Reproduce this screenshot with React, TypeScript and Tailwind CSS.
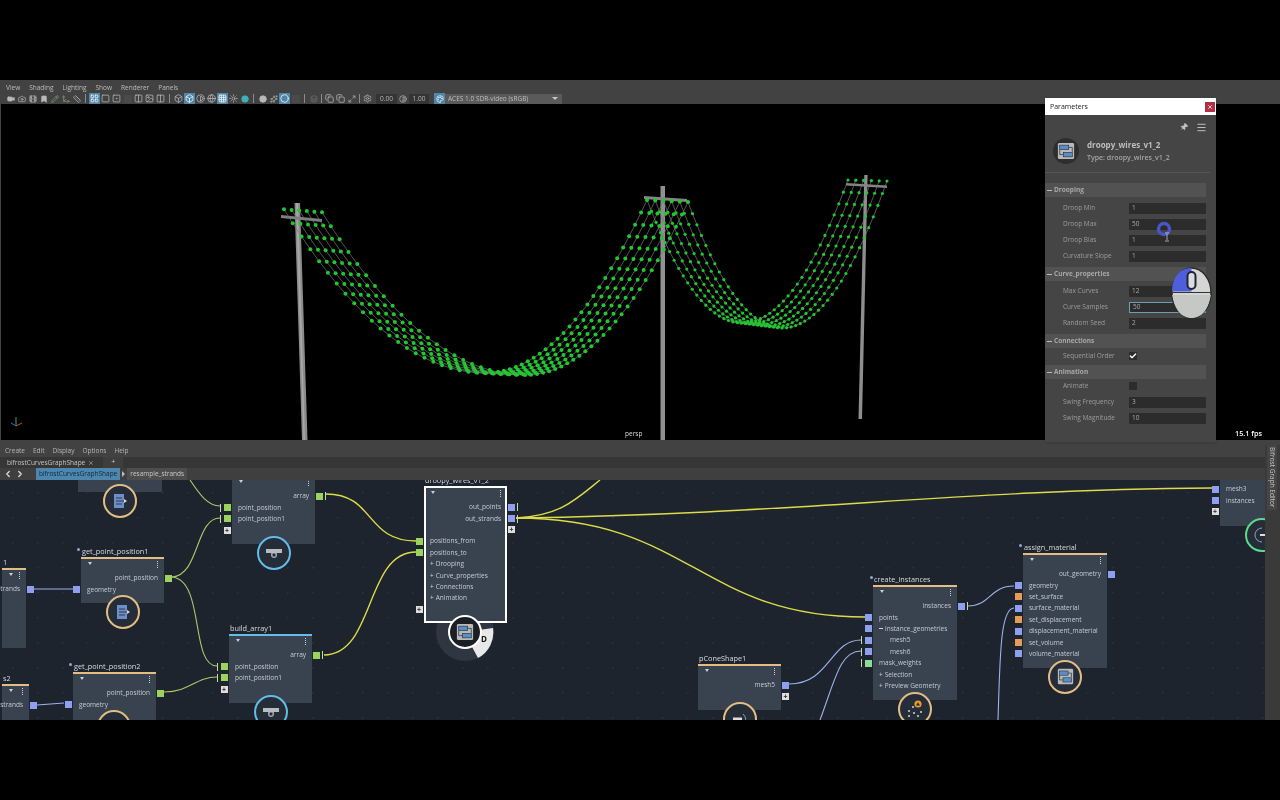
import React from "react";
import {
  Video,
  Camera,
  Film,
  Bookmark,
  Pencil,
  Move3d,
  Ruler,
  LayoutGrid,
  Square,
  SquareDot,
  Columns2,
  Image,
  Box,
  Sun,
  Circle,
  Layers,
  Copy,
  Maximize2,
  Settings,
  Contrast,
  Palette,
  Globe,
  Grid3x3,
  Sparkles,
  ChevronLeft,
  ChevronRight,
  X,
  Pin,
  Menu,
  Check,
} from "lucide-react";

// wire = two parabolas that meet at the lowest point, sampled as dots
type Pt = [number, number];

const sampleWire = (
  a: Pt,
  low: Pt,
  b: Pt,
  nLeft: number,
  nRight: number,
): Pt[] => {
  const pts: Pt[] = [];
  for (let i = 0; i < nLeft; i++) {
    const u = i / nLeft;
    pts.push([
      a[0] + (low[0] - a[0]) * u,
      low[1] - (low[1] - a[1]) * (1 - u) * (1 - u),
    ]);
  }
  for (let i = 0; i <= nRight; i++) {
    const u = i / nRight;
    pts.push([low[0] + (b[0] - low[0]) * u, low[1] - (low[1] - b[1]) * u * u]);
  }
  return pts;
};

const wires: { pts: Pt[]; r: number }[] = [];
for (let k = 0; k < 6; k++) {
  wires.push({
    r: 2,
    pts: sampleWire(
      [322 - 7.6 * k, 212.3 - 0.6 * k],
      [525 - 7.8 * k, 375 - 0.4 * k],
      [688 - 8.2 * k, 202 - 0.4 * k],
      23,
      27,
    ),
  });
  wires.push({
    r: 1.6,
    pts: sampleWire(
      [688 - 8.2 * k, 202 - 0.4 * k],
      [782 - 8 * k, 328 - 1 * k],
      [887 - 7.8 * k, 181 - 0.2 * k],
      21,
      23,
    ),
  });
}

const Viewport3D = () => (
  <svg
    className="absolute inset-0 w-full h-full"
    viewBox="1 104 1279 336"
    fill="none"
  >
    <polygon points="294.5,203 300,203 307.5,440 302,440" fill="#8c8c8c" />
    <polygon points="296,203 298,203 305,440 303.5,440" fill="#a8a8a8" />
    <polygon points="281,215 322,219 322,222 281,218" fill="#7e7e7e" />
    <polygon points="660.5,186 665,186 665,440 660.5,440" fill="#909090" />
    <polygon points="644,196 687,199 687,202 644,199" fill="#858585" />
    <polygon points="864.3,175 867.6,175 862,419 858.5,419" fill="#8e8e8e" />
    <polygon points="846,183 887,185.5 887,188 846,185.5" fill="#858585" />
    {wires.map((w, i) => (
      <g key={i}>
        <polyline
          points={w.pts.map((p) => p.join(",")).join(" ")}
          stroke="#777"
          strokeWidth="0.7"
        />
        {w.pts.map((p, j) => (
          <circle key={j} cx={p[0]} cy={p[1]} r={w.r} fill="#1fc92f" />
        ))}
      </g>
    ))}
    <line x1="16" y1="426" x2="22" y2="423" stroke="#c44" strokeWidth="1" />
    <line x1="16" y1="426" x2="16" y2="417" stroke="#3a6" strokeWidth="1" />
    <line x1="16" y1="426" x2="11" y2="423" stroke="#46c" strokeWidth="1" />
  </svg>
);

const Tb = ({
  children,
  on,
}: {
  children?: React.ReactNode;
  on?: boolean;
}) => (
  <div
    className={`w-[11px] h-[11px] shrink-0 flex items-center justify-center text-[#b9b9b9] ${
      on ? "bg-[#4f87a8] text-white" : ""
    }`}
  >
    {children}
  </div>
);

const Sep = ({ tight }: { tight?: boolean }) => (
  <div
    className={`w-px h-[9px] bg-[#8a8a8a] shrink-0 ${
      tight ? "mx-[2px]" : "mx-[3px]"
    }`}
  />
);

const Toolbar = () => (
  <div className="h-[11px] flex items-center pl-[5px] text-[6.5px]">
    <Tb><Video size={8} fill="currentColor" /></Tb>
    <Tb><Camera size={8} /></Tb>
    <Tb><Film size={8} /></Tb>
    <Tb><Bookmark size={8} fill="currentColor" /></Tb>
    <Tb><Pencil size={8} className="text-[#7fae7f]" /></Tb>
    <Tb><Move3d size={8} className="text-[#7fae7f]" /></Tb>
    <Tb><Ruler size={8} /></Tb>
    <Sep />
    <Tb on><LayoutGrid size={9} /></Tb>
    <Tb><Square size={9} /></Tb>
    <Tb><SquareDot size={9} /></Tb>
    <Tb><div className="w-[8px] h-[8px] bg-[#4a4a4a]" /></Tb>
    <Tb><Columns2 size={9} /></Tb>
    <Tb><Image size={9} /></Tb>
    <Tb><Columns2 size={9} /></Tb>
    <Sep />
    <Tb><Box size={9} /></Tb>
    <Tb on><Box size={9} /></Tb>
    <Tb><Contrast size={9} /></Tb>
    <Tb><Globe size={9} /></Tb>
    <Tb on><Grid3x3 size={9} /></Tb>
    <Tb><Sun size={9} /></Tb>
    <Tb><Circle size={8} fill="#3fb0b8" className="text-[#3fb0b8]" /></Tb>
    <Sep />
    <Tb><Circle size={8} fill="currentColor" /></Tb>
    <Tb><Sparkles size={8} /></Tb>
    <Tb on><Circle size={9} /></Tb>
    <Tb><div className="w-[8px] h-[8px] bg-[#4a4a4a]" /></Tb>
    <Sep />
    <Tb><Layers size={8} className="text-[#777]" /></Tb>
    <Sep tight />
    <Tb><Copy size={9} /></Tb>
    <Tb><Copy size={9} /></Tb>
    <Tb><Maximize2 size={8} /></Tb>
    <Sep tight />
    <Tb><Settings size={9} /></Tb>
    <div className="w-[21px] h-[10px] ml-[3px] bg-[#343434] text-[#b5b5b5] flex items-center justify-center">0.00</div>
    <Tb><Contrast size={8} /></Tb>
    <div className="w-[20px] h-[10px] ml-px bg-[#343434] text-[#b5b5b5] flex items-center justify-center">1.00</div>
    <div className="ml-[5px]">
      <Tb on><Palette size={8} /></Tb>
    </div>
    <div className="w-[117px] h-[10px] bg-[#5a5a5a] text-[#bdbdbd] flex items-center justify-between pl-[3px] pr-[4px]">
      <span>ACES 1.0 SDR-video (sRGB)</span>
      <span className="w-0 h-0 border-l-[3px] border-r-[3px] border-t-[3px] border-l-transparent border-r-transparent border-t-[#c4c4c4]" />
    </div>
  </div>
);

const CompoundIcon = ({ size = 20 }: { size?: number }) => (
  <svg width={size} height={size} viewBox="0 0 20 20" fill="none">
    <rect x="1" y="1" width="18" height="18" rx="1.5" fill="#b9b9b9" />
    <rect x="3" y="3.5" width="10" height="5" fill="#5b8ec9" stroke="#26303a" strokeWidth="0.7" />
    <rect x="7" y="11.5" width="10" height="5" fill="#5b8ec9" stroke="#26303a" strokeWidth="0.7" />
    <path d="M3 8.5v5.5h4M13 6h4v5" stroke="#26303a" strokeWidth="0.8" />
  </svg>
);

const ParamInput = ({ value, focus }: { value: string; focus?: boolean }) => (
  <div
    className={`w-[77px] h-[11px] bg-[#2c2c2c] flex items-center pl-[3px] text-[#a9a9a9] ${
      focus ? "border border-[#6d9cb8]" : ""
    }`}
  >
    {value}
  </div>
);

const ParamRow = ({ label, children }: { label: string; children: React.ReactNode }) => (
  <div className="h-4 flex items-center pl-[18px]">
    <span className="w-[66px] text-[#9c9c9c]">{label}</span>
    {children}
  </div>
);

const Section = ({
  title,
  top,
  body,
  children,
}: {
  title: string;
  top: string;
  body: string;
  children: React.ReactNode;
}) => (
  <div>
    <div className={`${top} w-[161px] h-[14px] bg-[#525252] flex items-center pl-[2px] gap-[2px] text-[#a8a8a8] font-bold`}>
      <span className="w-[5px] h-px bg-[#bbb]" />
      {title}
    </div>
    <div className={body}>{children}</div>
  </div>
);

const ParametersPanel = () => (
  <div className="absolute left-[1044px] top-[-6px] w-[171px] h-[344px] bg-[#454545] text-[6.5px] shadow">
    <div className="h-[17px] pt-px bg-white flex items-center justify-between pl-[5px] pr-[1px] text-[#222] text-[7px]">
      Parameters
      <div className="w-[10px] h-[10px] bg-[#b23043] flex items-center justify-center">
        <X size={6} className="text-white" strokeWidth={3} />
      </div>
    </div>
    <div className="mt-[6px] h-3 flex items-center justify-end gap-[8px] pr-[9px] text-[#c8c8c8]">
      <Pin size={8} className="rotate-45" fill="currentColor" />
      <Menu size={11} />
    </div>
    <div className="mt-[5px] h-[26px] flex items-center pl-[8px] gap-[8px]">
      <div className="w-[26px] h-[26px] rounded-full bg-[#2e2e2e] flex items-center justify-center">
        <CompoundIcon size={18} />
      </div>
      <div className="flex flex-col gap-[3px]">
        <span className="text-[8px] leading-[10px] font-bold text-[#bdbdbd]">droopy_wires_v1_2</span>
        <span className="text-[7px] leading-[9px] font-semibold text-[#a5a5a5]">Type: droopy_wires_v1_2</span>
      </div>
    </div>
    <div className="mt-[8px] w-[165px] border-t border-[#555]" />
    <div className="mt-[10px]">
      <Section title="Drooping" top="mt-[3px]" body="mt-[3px]">
        <ParamRow label="Droop Min"><ParamInput value="1" /></ParamRow>
        <ParamRow label="Droop Max"><ParamInput value="50" /></ParamRow>
        <ParamRow label="Droop Bias"><ParamInput value="1" /></ParamRow>
        <ParamRow label="Curvature Slope"><ParamInput value="1" /></ParamRow>
      </Section>
      <Section title="Curve_properties" top="mt-[3px]" body="mt-[2px]">
        <ParamRow label="Max Curves"><ParamInput value="12" /></ParamRow>
        <ParamRow label="Curve Samples"><ParamInput value="50" focus /></ParamRow>
        <ParamRow label="Random Seed"><ParamInput value="2" /></ParamRow>
      </Section>
      <Section title="Connections" top="mt-[3px]" body="mt-0">
        <ParamRow label="Sequential Order">
          <div className="w-2 h-2 bg-[#2c2c2c] flex items-center justify-center">
            <Check size={8} strokeWidth={4} className="text-white" />
          </div>
        </ParamRow>
      </Section>
      <Section title="Animation" top="mt-px" body="-mt-px">
        <ParamRow label="Animate">
          <div className="w-2 h-2 bg-[#2c2c2c]" />
        </ParamRow>
        <ParamRow label="Swing Frequency"><ParamInput value="3" /></ParamRow>
        <ParamRow label="Swing Magnitude"><ParamInput value="10" /></ParamRow>
      </Section>
    </div>
    {/* click ring + i-beam over Droop Max */}
    <svg className="absolute left-[111px] top-[122px]" width="20" height="24" viewBox="0 0 20 24" fill="none">
      <circle cx="8" cy="9" r="5.5" stroke="#4a55cc" strokeWidth="3.4" />
      <path d="M11 14v6M9 21h4M9 13h4" stroke="#ddd" strokeWidth="0.7" />
    </svg>
    {/* mouse overlay */}
    <svg className="absolute left-[126px] top-[169px]" width="41" height="52" viewBox="0 0 41 52" fill="none">
      <ellipse cx="20.5" cy="26" rx="19.5" ry="25" fill="#d5d5d5" stroke="#2a2a2a" strokeWidth="1.4" />
      <path d="M20.5 1C9 1 1 10 1 24.5h19.5z" fill="#4f5fdc" />
      <path d="M1 25.5h39" stroke="#333" strokeWidth="1.2" />
      <path d="M1.2 28C4 45 12 51 20.5 51S37 45 39.8 28z" fill="#c6c8c6" />
      <rect x="16.5" y="5" width="8" height="17" rx="4" fill="#dcdcdc" stroke="#1f2433" strokeWidth="2" />
    </svg>
  </div>
);

type Row = {
  label?: string;
  right?: boolean;
  port?: "green" | "blue" | "orange" | "pale" | "multi";
  tick?: boolean;
  plus?: boolean;
  plusRight?: boolean;
  mark?: "+" | "-";
  indent?: boolean;
};

const portColor = {
  green: "bg-[#9ad45f]",
  blue: "bg-[#8f9ff0]",
  orange: "bg-[#e89a58]",
  pale: "bg-[#8fdc95]",
  multi: "bg-[#8f9ff0]",
};

const NodeRow = ({ row }: { row: Row }) => (
  <div
    className={`relative h-[11.4px] flex items-center text-[#c4ccd4] px-[6px] ${
      row.right ? "justify-end" : ""
    } ${row.indent ? "pl-[17px]" : ""}`}
  >
    {row.mark === "+" && <span className="mr-[2px] text-[#d5d5d5]">+</span>}
    {row.mark === "-" && <span className="mr-[2px] w-[4px] h-px bg-[#d5d5d5]" />}
    <span>{row.label}</span>
    {row.port && row.right && (
      <span className={`absolute right-[-8px] w-[7px] h-[7px] ${portColor[row.port]}`} />
    )}
    {row.port && !row.right && (
      <span className={`absolute left-[-8.5px] w-[7px] h-[7px] ${portColor[row.port]}`} />
    )}
    {row.tick && row.right && (
      <span className="absolute right-[-11px] w-px h-[8px] bg-[#c9d9a0]" />
    )}
    {row.tick && !row.right && (
      <span className="absolute left-[-12px] w-px h-[8px] bg-[#c9d9a0]" />
    )}
    {row.plus && (
      <span className="absolute left-[-8.5px] w-[7px] h-[7px] bg-[#ddd] flex items-center justify-center text-[#222] text-[7px] leading-none font-bold">+</span>
    )}
    {row.plusRight && (
      <span className="absolute right-[-8px] w-[7px] h-[7px] bg-[#ddd] flex items-center justify-center text-[#222] text-[7px] leading-none font-bold">+</span>
    )}
  </div>
);

const ringIcons = {
  out: (
    <svg width="20" height="20" viewBox="0 0 20 20" fill="none">
      <rect x="4" y="3" width="10" height="14" fill="#6d8fc9" />
      <path d="M6 7h6M6 10h10M6 13h6" stroke="#26303a" strokeWidth="0.9" />
      <path d="M14 8l3 2-3 2" fill="#ddd" />
    </svg>
  ),
  cam: (
    <svg width="20" height="20" viewBox="0 0 20 20" fill="none">
      <rect x="2" y="6" width="16" height="4" fill="#b8bcc0" />
      <path d="M7 10h6v2a3 3 0 01-6 0z" fill="#9a9ea3" />
      <circle cx="10" cy="12" r="2" fill="#222c36" stroke="#bcd" strokeWidth="0.6" />
    </svg>
  ),
  compound: <CompoundIcon size={17} />,
  cone: (
    <svg width="20" height="20" viewBox="0 0 20 20" fill="none">
      <path d="M3 10h9" stroke="#ddd" strokeWidth="3" />
      <path d="M13 5a7 7 0 010 11" stroke="#8fa3b5" strokeWidth="1" />
    </svg>
  ),
  scatter: (
    <svg width="22" height="22" viewBox="0 0 22 22" fill="#d5d5d5">
      <circle cx="5" cy="13" r="1" />
      <circle cx="9" cy="9" r="1" />
      <circle cx="10" cy="15" r="1" />
      <circle cx="14" cy="18" r="1" />
      <circle cx="17" cy="14" r="1" />
      <circle cx="5" cy="18" r="1" />
      <circle cx="14" cy="6" r="3.6" fill="#e99a2f" />
      <path d="M12 7.4h4L14 4.2z" fill="#222" />
    </svg>
  ),
  mesh: (
    <svg width="20" height="20" viewBox="0 0 20 20" fill="none">
      <path d="M10 3a7 7 0 000 14" stroke="#8fa3b5" strokeWidth="1" />
      <path d="M8 10h8" stroke="#ddd" strokeWidth="2" />
    </svg>
  ),
};

const ringBorder = {
  tan: "border-[#e3bd84]",
  blue: "border-[#63bde8]",
  green: "border-[#5fd98c]",
};

const GraphNode = ({
  box,
  title,
  bar,
  rows,
  ring,
  ringColor,
  selected,
}: {
  box: string;
  title?: string;
  bar?: string;
  rows: Row[];
  ring?: keyof typeof ringIcons;
  ringColor?: keyof typeof ringBorder;
  selected?: boolean;
}) => (
  <div className={`absolute ${box}`}>
    <div
      className={`w-full h-full bg-[#39434f] ${
        bar ? `${bar} pt-[13.5px]` : "pt-[15.5px]"
      } ${selected ? "ring-2 ring-inset ring-white" : ""}`}
    >
      {rows.map((r, i) => (
        <NodeRow key={i} row={r} />
      ))}
    </div>
    <span className="absolute left-[7px] top-[2px] w-0 h-0 mt-[3px] border-l-[2px] border-r-[2px] border-t-[3px] border-l-transparent border-r-transparent border-t-[#c9d2da]" />
    <span className="absolute right-[6px] top-[4px] w-px h-[7px] border-l border-dotted border-[#c9d2da]" />
    {title && (
      <span className="absolute -top-[10.5px] left-[1px] text-[#d5dbe0] text-[7.3px] leading-[9px] whitespace-nowrap">
        {title}
      </span>
    )}
    {ring && ringColor && (
      <div
        className={`absolute left-1/2 -translate-x-1/2 top-[calc(100%-8.5px)] w-[34px] h-[34px] rounded-full border-2 bg-[#242d38] flex items-center justify-center ${ringBorder[ringColor]}`}
      >
        {ringIcons[ring]}
      </div>
    )}
  </div>
);

const tanBar = "border-t-2 border-[#e3bd84]";
const blueBar = "border-t-2 border-[#63bde8]";

const GraphCanvas = () => (
  <div className="relative flex-1 overflow-hidden bg-[#1d242d] bg-[radial-gradient(#272f39_1px,transparent_1px)] bg-[size:25px_25px] text-[6.5px]">
    <svg className="absolute inset-0 w-full h-full" viewBox="0 480 1265 240" fill="none">
      <g stroke="#dcdc4a" strokeWidth="1.4">
        <path d="M516 518C800 514 950 490 1212 488" />
        <path d="M516 518C560 516 575 500 600 480" />
        <path d="M516 518C690 518 700 617 865 617" />
        <path d="M326 494C375 494 365 541 416 541" />
        <path d="M324 655C375 655 365 552 416 552" />
      </g>
      <g stroke="#a9c96a" strokeWidth="1.1">
        <path d="M190 480C200 495 208 506 220 506" />
        <path d="M172 577C200 575 195 518 220 518" />
        <path d="M172 577C205 580 190 666 217 666" />
        <path d="M164 692C190 692 195 677 217 677" />
      </g>
      <g stroke="#9fb2ea" strokeWidth="1.1">
        <path d="M34 589H73" />
        <path d="M37 705L64 703" />
        <path d="M789 684C830 684 830 640 861 640" />
        <path d="M820 720C835 680 840 651 861 651" />
        <path d="M968 606C990 606 990 586 1014 586" />
        <path d="M998 720C1000 660 1000 608 1014 608" />
      </g>
    </svg>

    {/* radial menu behind the selected node */}
    <svg className="absolute left-[435px] top-[122px]" width="60" height="60" viewBox="0 0 60 60">
      <circle cx="30" cy="30" r="29" fill="#2d3641" />
      <path d="M58 26A29 29 0 0143 56L36 43A14 14 0 0044 28z" fill="#e8e8e8" />
      <text x="49" y="40" fontSize="8" fontWeight="700" fill="#111" textAnchor="middle">D</text>
    </svg>

    <GraphNode
      box="left-[78px] -top-[20px] w-[84px] h-[32px]"
      rows={[]}
      ring="out"
      ringColor="tan"
    />
    <GraphNode
      box="left-[232px] -top-[5px] w-[83px] h-[69px]"
      rows={[
        { label: "array", right: true, port: "green", tick: true },
        { label: "point_position", port: "green", tick: true },
        { label: "point_position1", port: "green", tick: true },
        { plus: true },
      ]}
      ring="cam"
      ringColor="blue"
    />
    <GraphNode
      box="left-[424px] top-[6px] w-[83px] h-[137px]"
      title="droopy_wires_v1_2"
      selected
      rows={[
        { label: "out_points", right: true, port: "blue", tick: true },
        { label: "out_strands", right: true, port: "blue", tick: true },
        { plusRight: true },
        { label: "positions_from", port: "green" },
        { label: "positions_to", port: "green" },
        { label: "Drooping", mark: "+" },
        { label: "Curve_properties", mark: "+" },
        { label: "Connections", mark: "+" },
        { label: "Animation", mark: "+" },
        { plus: true },
      ]}
    />
    <div className="absolute left-[448px] top-[135px] w-[34px] h-[34px] rounded-full border-2 border-white bg-[#1b1f24] flex items-center justify-center">
      <CompoundIcon size={18} />
    </div>
    <GraphNode
      box="left-[2px] top-[88px] w-[24px] h-[80px]"
      title="1"
      bar={tanBar}
      rows={[{ label: "trands", right: true, port: "blue" }]}
    />
    <GraphNode
      box="left-[81px] top-[77px] w-[83px] h-[46px]"
      title="get_point_position1"
      bar={tanBar}
      rows={[
        { label: "point_position", right: true, port: "green" },
        { label: "geometry", port: "blue" },
      ]}
      ring="out"
      ringColor="tan"
    />
    <GraphNode
      box="left-[2px] top-[204px] w-[27px] h-[60px]"
      title="s2"
      bar={tanBar}
      rows={[{ label: "strands", right: true, port: "blue" }]}
    />
    <GraphNode
      box="left-[73px] top-[192px] w-[83px] h-[60px]"
      title="get_point_position2"
      bar={tanBar}
      rows={[
        { label: "point_position", right: true, port: "green" },
        { label: "geometry", port: "blue" },
      ]}
    />
    <div className="absolute left-[97px] top-[230px] w-[34px] h-[34px] rounded-full border-2 border-[#e3bd84] bg-[#242d38]" />
    <GraphNode
      box="left-[229px] top-[154px] w-[83px] h-[69px]"
      title="build_array1"
      bar={blueBar}
      rows={[
        { label: "array", right: true, port: "green", tick: true },
        { label: "point_position", port: "green", tick: true },
        { label: "point_position1", port: "green", tick: true },
        { plus: true },
      ]}
      ring="cam"
      ringColor="blue"
    />
    <GraphNode
      box="left-[698px] top-[184px] w-[83px] h-[46px]"
      title="pConeShape1"
      bar={tanBar}
      rows={[
        { label: "mesh5", right: true, port: "blue" },
        { plusRight: true },
      ]}
      ring="cone"
      ringColor="tan"
    />
    <GraphNode
      box="left-[873px] top-[105px] w-[84px] h-[115px]"
      title="create_instances"
      bar={tanBar}
      rows={[
        { label: "instances", right: true, port: "blue", tick: true },
        { label: "points", port: "blue" },
        { label: "instance_geometries", port: "multi", mark: "-" },
        { label: "mesh5", port: "blue", tick: true, indent: true },
        { label: "mesh6", port: "blue", tick: true, indent: true },
        { label: "mask_weights", port: "pale", tick: true },
        { label: "Selection", mark: "+" },
        { label: "Preview Geometry", mark: "+" },
      ]}
      ring="scatter"
      ringColor="tan"
    />
    <GraphNode
      box="left-[1023px] top-[73px] w-[84px] h-[115px]"
      title="assign_material"
      bar={tanBar}
      rows={[
        { label: "out_geometry", right: true, port: "blue" },
        { label: "geometry", port: "blue" },
        { label: "set_surface", port: "orange" },
        { label: "surface_material", port: "blue" },
        { label: "set_displacement", port: "orange" },
        { label: "displacement_material", port: "blue" },
        { label: "set_volume", port: "orange" },
        { label: "volume_material", port: "blue" },
      ]}
      ring="compound"
      ringColor="tan"
    />
    <GraphNode
      box="left-[1220px] -top-[12px] w-[83px] h-[58px]"
      rows={[
        { label: "mesh3", port: "blue" },
        { label: "instances", port: "blue" },
        { plus: true },
      ]}
      ring="mesh"
      ringColor="green"
    />
    {/* dots next to titles */}
    <span className="absolute left-[77px] top-[68px] w-[3px] h-[3px] rounded-full bg-[#8fa8d8]" />
    <span className="absolute left-[69px] top-[183px] w-[3px] h-[3px] rounded-full bg-[#8fa8d8]" />
    <span className="absolute left-[870px] top-[96px] w-[3px] h-[3px] rounded-full bg-[#8fa8d8]" />
    <span className="absolute left-[1019px] top-[64px] w-[3px] h-[3px] rounded-full bg-[#8fa8d8]" />
  </div>
);

export default function App() {
  return (
    <div className="w-[1280px] h-[800px] bg-black flex flex-col font-['Open_Sans',sans-serif] blur-[0.3px]">
      <div className="h-[80px] bg-black" />
      <div className="h-[640px] bg-[#424242] flex flex-col">
        {/* viewport panel menus */}
        <div className="h-[13px] pt-[3px] flex items-center gap-[9px] pl-[6px] text-[6.5px] text-[#bcbcbc]">
          <span>View</span>
          <span>Shading</span>
          <span>Lighting</span>
          <span>Show</span>
          <span>Renderer</span>
          <span>Panels</span>
        </div>
        <Toolbar />
        <div className="relative h-[336px] bg-black ml-px text-white">
          <Viewport3D />
          <ParametersPanel />
          <span className="absolute left-[624px] top-[325px] text-[6.5px] text-[#ddd]">persp</span>
          <span className="absolute left-[1234px] top-[324px] text-[7.25px] font-semibold">15.1 fps</span>
        </div>
        <div className="flex-1 flex min-h-0 mt-[5px]">
          <div className="flex-1 flex flex-col min-w-0">
            <div className="h-3 flex items-center gap-[8px] pl-[5px] text-[6.5px] text-[#b5b5b5]">
              <span>Create</span>
              <span>Edit</span>
              <span>Display</span>
              <span>Options</span>
              <span>Help</span>
            </div>
            <div className="h-[11px] bg-[#363636] flex items-center pl-[7px] text-[6.5px] text-[#c4c4c4]">
              <span>bifrostCurvesGraphShape</span>
              <X size={6} className="ml-[3px]" />
              <span className="ml-[9px] w-[20px] h-[11px] bg-[#3e3e3e] flex items-center justify-center text-[7px]">+</span>
            </div>
            <div className="h-3 bg-[#3f3f3f] flex items-center pl-[3px] text-[6.5px]">
              <ChevronLeft size={10} className="text-[#ddd]" strokeWidth={3} />
              <ChevronRight size={10} className="ml-[2px] text-[#ddd]" strokeWidth={3} />
              <div className="ml-[11px] h-3 px-[3px] bg-[#4d87ae] flex items-center text-[#10293c]">
                bifrostCurvesGraphShape
              </div>
              <span className="mx-[2px] w-0 h-0 border-t-[3px] border-b-[3px] border-l-[3px] border-t-transparent border-b-transparent border-l-[#bbb]" />
              <div className="h-3 px-[3px] bg-[#4d4d4d] flex items-center text-[#c8c8c8]">
                resample_strands
              </div>
            </div>
            <GraphCanvas />
          </div>
          <div className="w-[15px] bg-[#3a3a3a] pl-[2px]">
            <div className="w-[10px] h-[65px] bg-[#454545] flex items-center justify-center">
              <span className="[writing-mode:vertical-rl] text-[6.5px] text-[#c4c4c4] whitespace-nowrap">
                Bifrost Graph Editor
              </span>
            </div>
          </div>
        </div>
      </div>
      <div className="h-[80px] bg-black" />
    </div>
  );
}
